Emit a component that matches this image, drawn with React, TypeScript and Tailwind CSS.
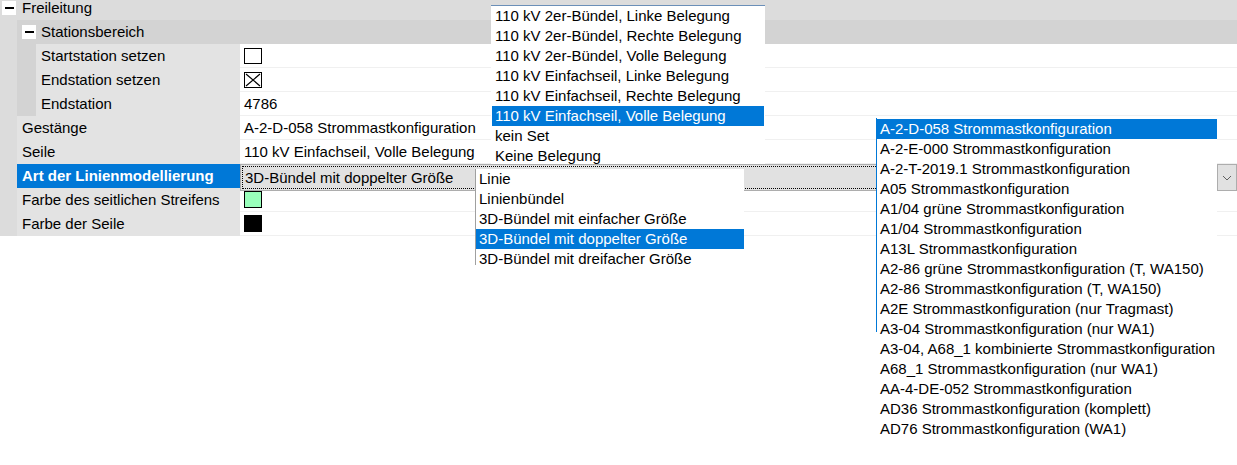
import React from 'react';

// Property grid of a "Freileitung" object with three open drop-down lists

const seileOptions = [
  '110 kV 2er-Bündel, Linke Belegung',
  '110 kV 2er-Bündel, Rechte Belegung',
  '110 kV 2er-Bündel, Volle Belegung',
  '110 kV Einfachseil, Linke Belegung',
  '110 kV Einfachseil, Rechte Belegung',
  '110 kV Einfachseil, Volle Belegung',
  'kein Set',
  'Keine Belegung',
];

const modellOptions = [
  'Linie',
  'Linienbündel',
  '3D-Bündel mit einfacher Größe',
  '3D-Bündel mit doppelter Größe',
  '3D-Bündel mit dreifacher Größe',
];

const gestaengeOptions = [
  'A-2-D-058 Strommastkonfiguration',
  'A-2-E-000 Strommastkonfiguration',
  'A-2-T-2019.1 Strommastkonfiguration',
  'A05 Strommastkonfiguration',
  'A1/04 grüne Strommastkonfiguration',
  'A1/04 Strommastkonfiguration',
  'A13L Strommastkonfiguration',
  'A2-86 grüne Strommastkonfiguration (T, WA150)',
  'A2-86 Strommastkonfiguration (T, WA150)',
  'A2E Strommastkonfiguration (nur Tragmast)',
  'A3-04 Strommastkonfiguration (nur WA1)',
  'A3-04, A68_1 kombinierte Strommastkonfiguration',
  'A68_1 Strommastkonfiguration (nur WA1)',
  'AA-4-DE-052 Strommastkonfiguration',
  'AD36 Strommastkonfiguration (komplett)',
  'AD76 Strommastkonfiguration (WA1)',
];

function Toggle() {
  return (
    <div className="flex h-[14px] w-[14px] shrink-0 items-center justify-center bg-white">
      <div className="h-[2px] w-[9px] bg-black" />
    </div>
  );
}

function CheckBox({ checked }: { checked?: boolean }) {
  return (
    <div className="h-[16px] w-[18px] border border-black bg-white">
      {checked && (
        <svg viewBox="0 0 16 14" className="h-full w-full">
          <path d="M1 1 L15 13 M15 1 L1 13" stroke="black" strokeWidth="1.2" fill="none" />
        </svg>
      )}
    </div>
  );
}

function Swatch({ color }: { color: string }) {
  return <div className={`h-[17px] w-[18px] border border-black ${color}`} />;
}

function SubRow({ label, children }: { label: string; children?: React.ReactNode }) {
  return (
    <div className="flex h-[24px]">
      <div className="w-[17px] bg-[#dcdcdc]" />
      <div className="w-[19px] bg-[#d3d3d3]" />
      <div className="flex w-[204px] items-center bg-[#e3e3e3] pl-[5px]">{label}</div>
      <div className="flex flex-1 items-center border-b border-[#f0f0f0] pl-[4px]">{children}</div>
    </div>
  );
}

function Row({ label, children }: { label: string; children?: React.ReactNode }) {
  return (
    <div className="flex h-[24px]">
      <div className="w-[17px] bg-[#dcdcdc]" />
      <div className="flex w-[223px] items-center bg-[#e3e3e3] pl-[5px]">{label}</div>
      <div className="flex flex-1 items-center border-b border-[#f0f0f0] pl-[4px]">{children}</div>
    </div>
  );
}

function PropertyGrid() {
  return (
    <div className="-mt-[4px] flex flex-col">
      <div className="flex h-[24px] items-center bg-[#dcdcdc] pl-[2px]">
        <Toggle />
        <span className="ml-[6px]">Freileitung</span>
      </div>
      <div className="flex h-[24px]">
        <div className="w-[17px] bg-[#dcdcdc]" />
        <div className="flex flex-1 items-center bg-[#d3d3d3] pl-[5px]">
          <Toggle />
          <span className="ml-[5px]">Stationsbereich</span>
        </div>
      </div>
      <SubRow label="Startstation setzen">
        <CheckBox />
      </SubRow>
      <SubRow label="Endstation setzen">
        <CheckBox checked />
      </SubRow>
      <SubRow label="Endstation">4786</SubRow>
      <Row label="Gestänge">A-2-D-058 Strommastkonfiguration</Row>
      <Row label="Seile">110 kV Einfachseil, Volle Belegung</Row>

      {/* selected row with open combobox */}
      <div className="flex h-[24px]">
        <div className="w-[17px] bg-[#dcdcdc]" />
        <div className="flex w-[223px] items-center bg-[#0078d7] pl-[5px] font-bold text-white">
          Art der Linienmodellierung
        </div>
        <div className="relative z-10 flex h-[27px] flex-1 border border-[#adadad] bg-[#e1e1e1]">
          <div className="m-[1px] flex flex-1 items-center border border-dotted border-black pl-[2px]">
            3D-Bündel mit doppelter Größe
          </div>
          <div className="-my-[1px] -mr-[1px] flex w-[20px] items-center justify-center border border-[#adadad] bg-[#e1e1e1]">
            <svg viewBox="0 0 10 6" className="h-[6px] w-[10px]">
              <path d="M1 1 L5 5 L9 1" stroke="#606060" strokeWidth="1" fill="none" />
            </svg>
          </div>
        </div>
      </div>

      <Row label="Farbe des seitlichen Streifens">
        <Swatch color="bg-[#99ffbb]" />
      </Row>
      <Row label="Farbe der Seile">
        <Swatch color="bg-black" />
      </Row>
    </div>
  );
}

function OptionList({ items, selected }: { items: string[]; selected: number }) {
  return (
    <>
      {items.map((item, i) => (
        <div
          key={item}
          className={`h-[20px] shrink-0 whitespace-nowrap pl-[3px] ${
            i === selected ? 'bg-[#0078d7] text-white' : ''
          }`}
        >
          {item}
        </div>
      ))}
    </>
  );
}

export default function App() {
  return (
    <div className="relative h-[465px] w-[1237px] overflow-hidden bg-white text-[15px] leading-[20px] text-black font-['Liberation_Sans',Arial,sans-serif]">
      <PropertyGrid />

      {/* Seile drop-down (behind the combobox) */}
      <div className="absolute left-[491px] top-[5px] z-0 flex h-[159px] w-[274px] flex-col overflow-hidden border-t border-[#6b8fb8] bg-white px-[1px]">
        <OptionList items={seileOptions} selected={5} />
      </div>

      {/* Art der Linienmodellierung drop-down */}
      <div className="absolute left-[475px] top-[169px] z-20 flex h-[96px] w-[269px] flex-col overflow-hidden border-l border-[#a0a0a0] bg-white">
        <OptionList items={modellOptions} selected={3} />
      </div>

      {/* Gestänge drop-down */}
      <div className="absolute left-[876px] top-[119px] z-20 flex h-[326px] w-[341px] flex-col bg-white pl-[1px]">
        <div className="absolute left-0 top-[-1px] h-[214px] w-[1px] bg-[#0078d7]" />
        <OptionList items={gestaengeOptions} selected={0} />
      </div>
    </div>
  );
}
